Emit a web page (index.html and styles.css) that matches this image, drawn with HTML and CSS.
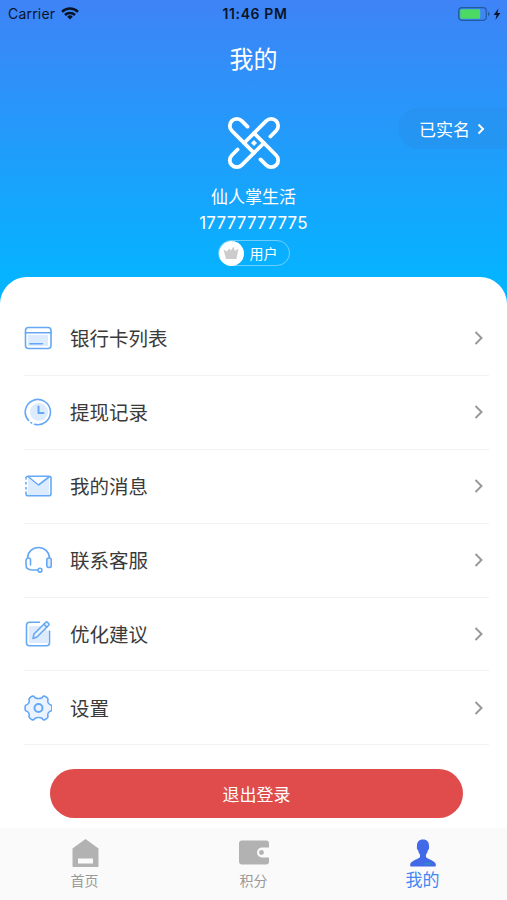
FILE: index.html
```html
<!DOCTYPE html>
<html lang="zh-CN">
<head>
    <meta charset="UTF-8">
    <meta name="viewport" content="width=device-width, initial-scale=1.0">
    <title>我的</title>
    <link rel="stylesheet" href="styles.css">
</head>
<body>
    <div class="header">
        <div class="status-bar">
            <div class="status-left">
                <span class="carrier">Carrier</span>
                <svg class="wifi" width="18" height="13" viewBox="0 0 18 13" fill="none" stroke="#0a1428" stroke-width="2.5">
                    <path d="M1 4.8a11.4 11.4 0 0 1 16 0"/>
                    <path d="M4 8a7.1 7.1 0 0 1 10 0"/>
                    <path d="M9 12.6l-2.8-2.9a4 4 0 0 1 5.6 0z" fill="#0a1428" stroke="none"/>
                </svg>
            </div>
            <span class="time">11:46 PM</span>
            <div class="status-right">
                <svg width="44" height="14" viewBox="0 0 44 14">
                    <rect x=".7" y=".7" width="27.6" height="12.6" rx="3.2" fill="none" stroke="#235a9c" stroke-width="1.2"/>
                    <rect x="2.2" y="2.2" width="20" height="9.6" rx="1.4" fill="#4cd964"/>
                    <path d="M30 5v4q1.6-.6 1.6-2T30 5z" fill="#235a9c"/>
                    <path d="M40.5 1.5L35.6 8h3l-1.2 5 5-6.9h-3z" fill="#0a1428"/>
                </svg>
            </div>
        </div>
        <h1 class="title">我的</h1>
        <div class="verified">已实名
            <svg width="8" height="12" viewBox="0 0 8 12" fill="none" stroke="#fff" stroke-width="2"><path d="M1.500 1.500L6 6l-4.500 4.500"/></svg>
        </div>
        <div class="profile">
            <svg class="logo" width="54" height="54" viewBox="0 0 54 54" fill="none" stroke="#fff" stroke-width="3.800" stroke-linecap="round">
                <path d="M20.500 10.600L14.750 4.850A7 7 0 0 0 4.850 14.750L27 36.900"/>
                <path d="M20.500 10.600L14.750 4.850A7 7 0 0 0 4.850 14.750L27 36.900" transform="rotate(90 27 27)"/>
                <path d="M20.500 10.600L14.750 4.850A7 7 0 0 0 4.850 14.750L27 36.900" transform="rotate(180 27 27)"/>
                <path d="M20.500 10.600L14.750 4.850A7 7 0 0 0 4.850 14.750L27 36.900" transform="rotate(270 27 27)"/>
                <path d="M27 24l3 3-3 3-3-3z" stroke="none" fill="#fff"/>
            </svg>
            <div class="name">仙人掌生活</div>
            <div class="phone">17777777775</div>
            <div class="level">
                <span class="level-icon">
                    <svg width="16" height="14" viewBox="0 0 16 14" fill="#ccc"><path d="M.5 3.500l3.500 2L6 2.500l2 2 2.500-4 1.500 4.500 3.500-2.500-2 10.500H3z"/></svg>
                </span>
                <span>用户</span>
            </div>
        </div>
    </div>

    <div class="panel">
        <ul class="menu">
            <li>
                <svg class="icon" viewBox="0 0 28 28">
                    <path class="tint" d="M4 11h20v11H4z"/>
                    <rect x="1.500" y="3.500" width="25.500" height="21" rx="3"/>
                    <path d="M1.500 8.700H27"/>
                    <path d="M6 19.800h12.500"/>
                </svg>
                <span>银行卡列表</span>
                <svg class="arrow" viewBox="0 0 10 16"><path d="M1.500 2l6 6-6 6"/></svg>
            </li>
            <li>
                <svg class="icon" viewBox="0 0 28 28">
                    <circle class="tint" cx="15" cy="14" r="9"/>
                    <path d="M10.500 26.200A12.600 12.600 0 1 0 4.500 22.500M7 24.600l.6.400"/>
                    <path d="M14.500 8.500v6.500h5" stroke-width="2"/>
                </svg>
                <span>提现记录</span>
                <svg class="arrow" viewBox="0 0 10 16"><path d="M1.500 2l6 6-6 6"/></svg>
            </li>
            <li>
                <svg class="icon" viewBox="0 0 28 28">
                    <path class="tint" d="M4 6l10.500 8L25 6v17H4z"/>
                    <path d="M2 7V6q0-1.800 2-1.800h21q2 0 2 2v15.500q0 2-2 2H4q-2 0-2-2V20M2 10.500v1.500M2 15.500v1.500"/>
                    <path d="M4.500 5l10 8L25 5"/>
                </svg>
                <span>我的消息</span>
                <svg class="arrow" viewBox="0 0 10 16"><path d="M1.500 2l6 6-6 6"/></svg>
            </li>
            <li>
                <svg class="icon" viewBox="0 0 28 28">
                    <path d="M3.500 12C4 5.500 8.500 1.500 14.500 1.500S25 5.500 25.500 12"/>
                    <rect class="tint" x="22.800" y="12" width="4.500" height="9.500" rx="2"/>
                    <path d="M6.500 19v-5q0-2-2-2t-2.500 2v5q0 2.500 1.500 3.700 1.500 1.300 4 1.300H14"/>
                    <rect x="22.800" y="12" width="4.500" height="9.500" rx="2"/>
                    <circle cx="16" cy="24.200" r="1.900"/>
                </svg>
                <span>联系客服</span>
                <svg class="arrow" viewBox="0 0 10 16"><path d="M1.500 2l6 6-6 6"/></svg>
            </li>
            <li>
                <svg class="icon" viewBox="0 0 28 28">
                    <path class="tint" d="M5 6h11l8 5v12H5z"/>
                    <path d="M15.500 2.300H5.500q-3 0-3 3v17.500q0 3 3 3h17q3 0 3-3V11"/>
                    <path class="pen" d="M9 18.500l1-4.500L21.800 2.300q.8-.7 1.600 0l1.300 1.300q.8.800 0 1.600L13 17z"/>
                    <path d="M20 4.300l2.800 2.800"/>
                </svg>
                <span>优化建议</span>
                <svg class="arrow" viewBox="0 0 10 16"><path d="M1.500 2l6 6-6 6"/></svg>
            </li>
            <li>
                <svg class="icon" viewBox="0 0 28 28">
                    <path class="gear" d="M11 3.700Q10 1.500 8 2.300 5.500 3.500 4.900 5.200q.9 2.300-.4 4.200-1 1.400-3 1.800-.9 2.800 0 5.600 2 .4 3 1.800 1.300 1.900.4 4.200.6 1.700 3.100 2.900 2 .8 3-1.400 1.500-.8 3.500-.8t3.500.8q1 2.200 3 1.400 2.500-1.200 3.100-2.900-.9-2.300.4-4.200 1-1.400 3-1.800.9-2.800 0-5.600-2-.4-3-1.800-1.300-1.900-.4-4.200-.6-1.700-3.100-2.900-2-.8-3 1.400-1.500.8-3.500.8t-3.500-.8z"/>
                    <circle class="hub" cx="14.500" cy="14" r="4"/>
                </svg>
                <span>设置</span>
                <svg class="arrow" viewBox="0 0 10 16"><path d="M1.500 2l6 6-6 6"/></svg>
            </li>
        </ul>
        <button class="logout">退出登录</button>
    </div>

    <div class="tab-bar">
        <div class="tab">
            <svg width="28" height="28" viewBox="0 0 28 28" fill="#b2b2b2"><path fill-rule="evenodd" d="M14.500 0l13 9.500V27q0 1-1 1h-24q-1 0-1-1V9.500zM7 19.500v5h15v-5z"/></svg>
            <span>首页</span>
        </div>
        <div class="tab">
            <svg width="30" height="28" viewBox="0 0 30 28" fill="#b2b2b2"><path d="M3 1.500h24q3 0 3 3v4h-7a5 5 0 0 0 0 10h7v4q0 3-3 3H3q-3 0-3-3v-18q0-3 3-3z"/><circle cx="22.500" cy="13.500" r="2.400"/></svg>
            <span>积分</span>
        </div>
        <div class="tab active">
            <svg width="26" height="28" viewBox="0 0 26 28" fill="#4169e8"><path d="M13 0.500c4.200 0 6 2.500 6 6.500 0 .8.300 1.500 0 2.500-.2 1-.8 1.500-1.200 2-.4 2-1 3-1.800 4v2.500c1 2 9.500 3.500 9.800 7.500.2 2-.3 2-1.300 2h-23c-1 0-1.500 0-1.300-2 .3-4 8.800-5.500 9.800-7.500v-2.500c-.8-1-1.400-2-1.800-4-.4-.5-1-1-1.200-2-.3-1 0-1.700 0-2.500 0-4 1.800-6.500 6-6.500z"/><path d="M14.500 24h6.500v1.600h-6.500z" fill="#2a93b5"/></svg>
            <span>我的</span>
        </div>
    </div>
</body>
</html>
```
FILE: styles.css
```css
* {
    box-sizing: border-box;
}
body {
    margin: 0;
    height: 900px;
    display: flex;
    flex-direction: column;
    font-family: Inter, "Noto Sans CJK SC", sans-serif;
    background-color: #fff;
    overflow: hidden;
}
.header {
    position: relative;
    height: 304px;
    flex-shrink: 0;
    background: linear-gradient(#3f83f7 0, #05b3ff 277px);
    color: #fff;
}
.status-bar {
    display: grid;
    grid-template-columns: 1fr auto 1fr;
    align-items: center;
    height: 27px;
    padding: 0 5px 0 8px;
    color: #0a1428;
    font-size: 14px;
}
.status-left {
    display: flex;
    align-items: center;
    gap: 6px;
}
.carrier {
    letter-spacing: 0.2px;
}
.time {
    font-weight: 600;
    letter-spacing: 0.6px;
}
.status-right {
    display: flex;
    justify-content: flex-end;
}
.title {
    margin: 15px 0 0;
    font-size: 24px;
    font-weight: 400;
    line-height: 36px;
    text-align: center;
}
.verified {
    position: absolute;
    top: 108px;
    right: 0;
    width: 109px;
    height: 41px;
    padding-left: 21px;
    display: flex;
    align-items: center;
    gap: 7px;
    border-radius: 21px 0 0 21px;
    background-color: rgba(40, 140, 225, 0.35);
    font-size: 17px;
}
.profile {
    display: flex;
    flex-direction: column;
    align-items: center;
    margin-top: 38px;
}
.name {
    margin-top: 14px;
    font-size: 17px;
    line-height: 26px;
}
.phone {
    font-size: 17px;
    line-height: 27px;
    letter-spacing: 0.2px;
}
.level {
    display: flex;
    align-items: center;
    gap: 6px;
    width: 72px;
    height: 26px;
    margin-top: 3px;
    border: 1px solid rgba(255, 255, 255, 0.4);
    border-radius: 13px;
    font-size: 14px;
}
.level-icon {
    display: flex;
    align-items: center;
    justify-content: center;
    width: 25px;
    height: 25px;
    border-radius: 50%;
    background-color: #fff;
}
.panel {
    position: relative;
    flex: 1;
    margin-top: -27px;
    padding: 25px 18px 0 24px;
    border-radius: 27px 27px 0 0;
    background-color: #fff;
}
.menu {
    list-style: none;
    margin: 0;
    padding: 0;
}
.menu li {
    display: flex;
    align-items: center;
    height: 73.9px;
    padding-right: 5px;
    border-bottom: 1px solid #f2f2f2;
    color: #3a3a3a;
    font-size: 19.5px;
}
.menu span {
    flex: 1;
    margin-left: 18px;
    padding-bottom: 1px;
}
.icon {
    width: 28px;
    height: 28px;
    fill: none;
    stroke: #65a8f5;
    stroke-width: 1.6;
    stroke-linecap: round;
    stroke-linejoin: round;
}
.icon .tint {
    fill: #dcebfd;
    stroke: none;
}
.icon .pen,
.icon .gear {
    fill: #eaf3fe;
}
.icon .hub {
    stroke-width: 2;
}
.arrow {
    width: 10px;
    height: 16px;
    fill: none;
    stroke: #999;
    stroke-width: 2;
}
.logout {
    display: block;
    width: 413px;
    height: 49px;
    margin: 24px 0 0 26px;
    padding: 0;
    border: none;
    border-radius: 25px;
    background-color: #e04b4c;
    color: #fff;
    font-family: inherit;
    font-size: 17px;
}
.tab-bar {
    position: relative;
    display: flex;
    height: 72px;
    flex-shrink: 0;
    background-color: #fafafa;
}
.tab {
    flex: 1;
    display: flex;
    flex-direction: column;
    align-items: center;
    padding-top: 11px;
    color: #999;
    font-size: 14px;
    line-height: 28px;
}
.tab.active {
    color: #4486f4;
    font-size: 17px;
    line-height: 27px;
}
```
